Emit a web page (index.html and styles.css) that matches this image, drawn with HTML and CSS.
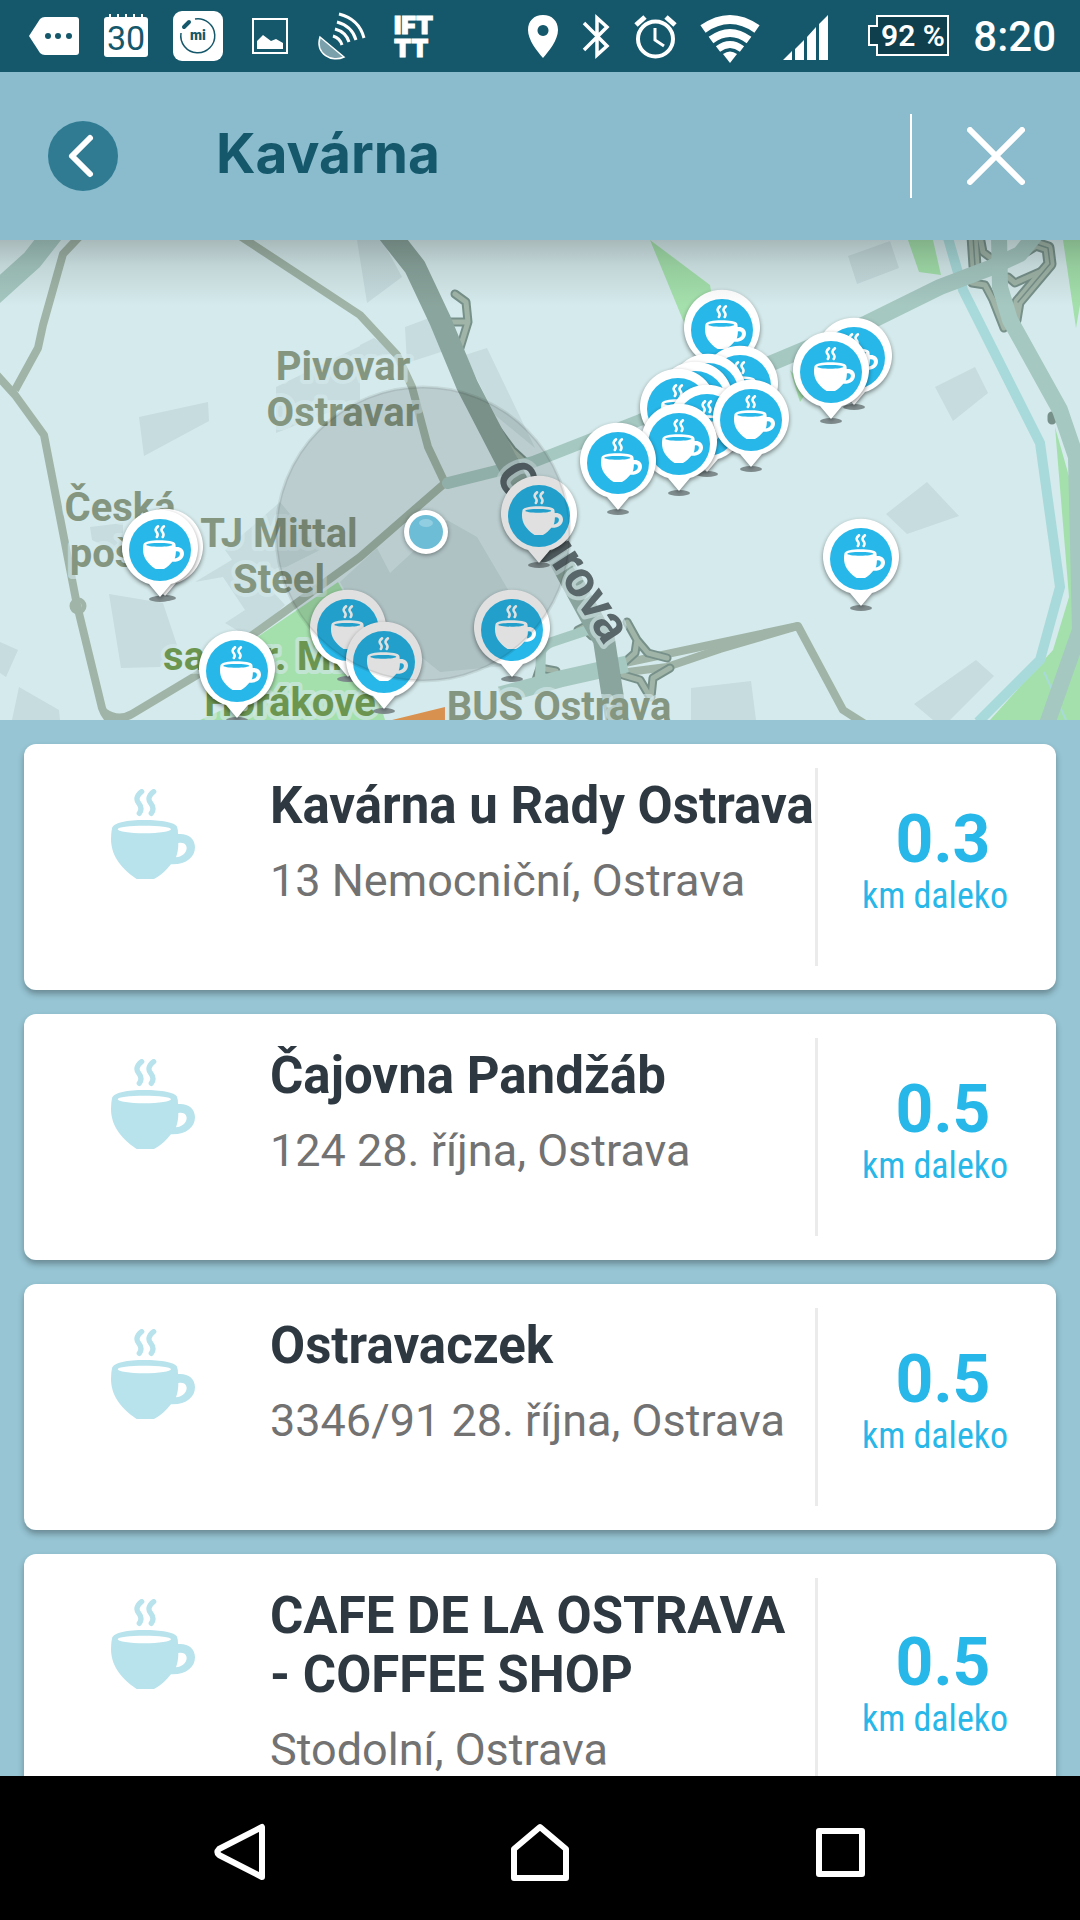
FILE: index.html
```html
<!DOCTYPE html>
<html lang="cs">
<head>
  <meta charset="UTF-8" />
  <meta name="viewport" content="width=device-width, initial-scale=1.0" />
  <title>Kavárna</title>
  <link rel="stylesheet" href="styles.css">
</head>
<body>
  <!-- shared shapes -->
  <svg class="defs" width="0" height="0" aria-hidden="true">
    <symbol id="cup" viewBox="0 0 252 270">
      <g fill="none" stroke="currentColor" stroke-width="16" stroke-linecap="round">
        <path d="M92 8C76 20 74 33 84 44C92 54 92 63 85 73" />
        <path d="M128 8C112 20 110 33 120 44C128 54 128 63 121 73" />
      </g>
      <path fill="currentColor" fill-rule="evenodd" d="M3 118C8 100 50 93 100 93C150 93 192 100 198 113Q201 120 201 135C230 132 252 148 252 175C252 205 225 228 180 226C166 243 150 260 129 270H77C20 232 0 190 0 150Q0 132 3 118ZM20 121C20 128 56 133 100 133S180 128 180 121S144 110 100 110S20 114 20 121ZM202 162C220 158 227 168 227 178C226 193 212 204 195 205C200 192 202 178 202 162Z" />
    </symbol>
    <symbol id="pin" viewBox="-50 -51 100 110" overflow="visible">
      <ellipse cx="0" cy="49" rx="11" ry="3" fill="#7f8c8e" />
      <path class="pin-body" d="M-11 34L0 47L11 34A38 38 0 1 0 -11 34Z" />
      <circle r="31" fill="#27b7e8" />
      <use href="#cup" x="-17" y="-25" width="41" height="44" color="#fff" />
    </symbol>
  </svg>

  <div class="statusbar">
    <div class="notifications">
      <svg viewBox="0 0 72 72"><path fill="#fff" d="M11 36L22 19Q24 17 27 17H58Q61 17 61 20V52Q61 55 58 55H27Q24 55 22 53Z" /><g fill="#15586b"><circle cx="30" cy="36" r="3" /><circle cx="40" cy="36" r="3" /><circle cx="51" cy="36" r="3" /></g></svg>
      <svg viewBox="0 0 72 72"><rect x="14" y="17" width="44" height="40" rx="3" fill="#fff" /><path stroke="#fff" stroke-width="2" d="M20 14v4M28 14v4M36 14v4M44 14v4M52 14v4" /><text class="calendar-day" x="36" y="50">30</text></svg>
      <svg viewBox="0 0 72 72"><rect x="11" y="11" width="50" height="50" rx="9" fill="#fff" /><path fill="none" stroke="#15586b" stroke-width="1.5" d="M33 19A17 17 0 1 1 19 33" /><path stroke="#15586b" stroke-width="4" stroke-linecap="round" d="M22 27L27 22" /><text class="mi-text" x="36" y="40">mi</text></svg>
      <svg viewBox="0 0 72 72"><rect x="19" y="19" width="34" height="34" fill="none" stroke="#fff" stroke-width="2" /><path fill="#fff" d="M23 49V41L29 35L37 41L42 39L49 43V49Z" /></svg>
      <svg viewBox="0 0 72 72"><path fill="#7aa0ac" stroke="#fff" stroke-width="1.5" d="M14 37L38 57C26 63 9 54 14 37Z" /><g fill="none" stroke="#fff" stroke-width="3"><path d="M27 36Q34 38 36 45" /><path d="M29 29Q40 32 43 42" /><path d="M31 22Q46 26 50 40" /><path d="M33 14Q53 19 58 38" /></g></svg>
      <svg viewBox="0 0 72 72"><text class="ifttt-text"><tspan x="16" y="34">IFT</tspan><tspan x="16" y="57">TT</tspan></text></svg>
    </div>
    <div class="system">
      <svg width="30" height="44" viewBox="0 0 30 44"><path fill="#fff" fill-rule="evenodd" d="M15 0C24 0 30 6 30 15C30 25 21 36 15 43C9 36 0 25 0 15C0 6 6 0 15 0ZM15 10a5.500 5.500 0 1 0 .01 0Z" /></svg>
      <svg width="26" height="44" viewBox="0 0 26 44"><path fill="none" stroke="#fff" stroke-width="3.500" d="M1 8L24 31L14 40V3L24 12L1 35" /></svg>
      <svg width="43" height="44" viewBox="0 0 43 44"><circle cx="21.500" cy="24" r="17.500" fill="none" stroke="#fff" stroke-width="4" /><path fill="none" stroke="#fff" stroke-width="3" d="M21 13V25L30 31" /><path stroke="#fff" stroke-width="5" d="M2 10L11 2M41 10L32 2" /></svg>
      <svg width="56" height="48" viewBox="0 0 56 48"><g fill="none" stroke="#fff"><path stroke-width="9" d="M1 14Q28 -5 55 14" /><path stroke-width="8" d="M9 25Q28 11 47 25" /><path stroke-width="7" d="M16 34Q28 25 40 34" /></g><path fill="#fff" d="M21 39Q28 34 35 39L28 48Z" /></svg>
      <svg width="60" height="46" viewBox="0 0 60 46"><path fill="#fff" d="M0 45L9 36V45ZM12 45V34L21 25V45ZM24 45V22L33 12V45ZM36 45V9L45 0V45Z" /></svg>
      <svg width="80" height="42" viewBox="0 0 80 42"><path fill="#0f3e4c" stroke="#fff" stroke-width="2" d="M9 1H80V40H9V30H1V11H9Z" /><text class="battery-text" x="45" y="31">92 %</text></svg>
      <span class="clock">8:20</span>
    </div>
  </div>

  <header class="header">
    <button class="back" aria-label="Zpět">
      <svg width="70" height="70" viewBox="0 0 70 70"><path d="M42 17L24 35L42 53" /></svg>
    </button>
    <h1>Kavárna</h1>
    <button class="close" aria-label="Zavřít">
      <svg width="58" height="58" viewBox="0 0 58 58"><path d="M3 3L55 55M55 3L3 55" /></svg>
    </button>
  </header>

  <svg class="map" viewBox="0 0 1080 480" preserveAspectRatio="xMidYMid slice">
    <defs>
      <linearGradient id="shade" x1="0" y1="0" x2="0" y2="1">
        <stop offset="0" stop-color="#000" stop-opacity=".21" />
        <stop offset=".4" stop-color="#000" stop-opacity=".09" />
        <stop offset="1" stop-color="#000" stop-opacity="0" />
      </linearGradient>
      <path id="street" d="M494 235L620 430" />
    </defs>

    <!-- buildings -->
    <path fill="#c6dcde" d="M139 177L208 162L209 181L144 216ZM109 354L163 363L177 405L160 427L121 428ZM0 402L18 410L6 437L0 433ZM19 447L59 470L60 480H12ZM195 342L240 315L285 365L250 398L225 383L245 370L223 337ZM276 147L360 106V160L276 193ZM90 287L123 283V315L92 300ZM357 0L382 0L402 37L367 63ZM405 87L432 77L447 110L407 123ZM360 105L374 98L396 113L360 120ZM465 115L487 108L535 208L495 175ZM225 310L280 262L320 310L250 345ZM340 342L377 308L390 333L447 280L477 297L510 353L515 425L440 432L350 360ZM848 16L890 1L899 28L857 44ZM935 147L975 127L988 153L953 181ZM886 274L927 242L959 276L907 294ZM914 464L976 420L994 436L950 480H933ZM691 448L751 441L756 480H691Z" />
    <!-- parks -->
    <path fill="#a4e0ac" d="M650 0L710 45L715 75L685 85ZM908 0H933L941 35L919 32ZM1063 0H1080V65L1076 88ZM1055 187L1072 247L1080 370V480H990L1053 410L1069 357ZM338 342L348 360L385 480H200L265 450L250 402ZM790 130L800 162L808 150Z" />
    <path fill="#d9914f" d="M392 480L445 467V480Z" />
    <!-- river -->
    <path fill="none" stroke="#a8dadb" stroke-width="10" d="M948 -2L963 50L1040 203L1060 347L1040 420L978 482" />
    <path fill="none" stroke="#a8dadb" stroke-width="2" d="M1044 432L1066 480" />

    <!-- small roads -->
    <g fill="none" stroke="#a0b5a8" stroke-width="8" stroke-linejoin="round">
      <path d="M80 -4L63 14L43 85L38 108L15 150" />
      <path d="M-4 134L15 155L44 195L77 365L102 468Q105 477 112 482" />
      <path d="M104 472Q118 482 132 474L197 435L283 373L360 317L445 243" />
      <path d="M240 -4L360 75L397 115L412 147L428 207L445 243" />
      <circle cx="78" cy="366" r="6" stroke-width="5" />
      <path d="M620 424L700 407L798 386L843 470L865 484" />
      <path d="M620 433L667 427L720 409L798 386" />
    </g>

    <!-- slip roads -->
    <g fill="none" stroke-linejoin="round" stroke-linecap="round">
      <g stroke="#77918a" stroke-width="9">
        <path d="M455 54L466 62L468 82L460 108M450 82H468" />
        <path d="M490 180L512 210L525 222M627 382L637 400L648 413L667 418M637 400L635 413L625 422M623 435L640 440L650 457M670 428L653 438L651 457M578 390L592 383M584 388L592 396M540 428L536 440M540 428L556 431" />
        <path d="M980 -4L983 12L991 18M1008 37L1015 43L1044 30M972 43L985 45L993 60L1004 88M1052 176V180" />
        <path stroke-width="13" d="M973 -4L975 26M1023 12L1036 4L1048 8L1050 24L1018 62L1015 80" />
      </g>
      <g stroke="#a0b5a8" stroke-width="5">
        <path d="M455 54L466 62L468 82L460 108M450 82H468" />
        <path d="M490 180L512 210L525 222M627 382L637 400L648 413L667 418M637 400L635 413L625 422M623 435L640 440L650 457M670 428L653 438L651 457M578 390L592 383M584 388L592 396M540 428L536 440M540 428L556 431" />
        <path d="M980 -4L983 12L991 18M1008 37L1015 43L1044 30M972 43L985 45L993 60L1004 88" />
        <path stroke-width="9" d="M973 -4L975 26M1023 12L1036 4L1048 8L1050 24L1018 62L1015 80" />
      </g>
      <path stroke="#77918a" stroke-width="1.5" d="M973 -4L975 26M1023 12L1036 4L1048 8L1050 24L1018 62" />
    </g>

    <!-- main roads -->
    <g fill="none" stroke="#a5c8c1" stroke-linejoin="round">
      <path stroke-width="21" d="M-8 56L32 20L54 -8" />
      <path stroke-width="12" stroke-linecap="round" d="M448 243L533 222L640 180L770 123" />
      <path stroke-width="16" d="M760 128L867 83L940 47L990 28L1020 14L1036 -6" />
      <path stroke-width="16" d="M999 -4L1000 47L1010 80L1060 170L1076 217L1080 390L1047 484" />
      <path stroke-width="17" d="M500 455L560 439L627 424" />
      <path stroke-width="10" d="M540 440L541 412Q543 406 552 402L588 390" />
    </g>
    <path fill="none" stroke="#8aa59d" stroke-width="22" stroke-linejoin="round" d="M386 -10L415 27L440 80L467 145L512 232L590 375L604 400L617 484" />

    <g class="place">
      <text x="343" y="140">Pivovar</text>
      <text x="343" y="186">Ostravar</text>
      <text x="120" y="281">Česká</text>
      <text x="120" y="327">pošta</text>
      <text x="279" y="307">TJ Mittal</text>
      <text x="279" y="353">Steel</text>
      <text x="559" y="480">BUS Ostrava</text>
    </g>
    <g class="place park">
      <text x="290" y="430">sad Dr. Milady</text>
      <text x="290" y="476">Horákové</text>
    </g>
    <text class="place street"><textPath href="#street">Cingrova</textPath></text>

    <!-- cafe pins -->
    <g>
      <use href="#pin" x="672" y="39" width="100" height="110" />
      <use href="#pin" x="690" y="95" width="100" height="110" />
      <use href="#pin" x="658" y="103" width="100" height="110" />
      <use href="#pin" x="645" y="111" width="100" height="110" />
      <use href="#pin" x="628" y="118" width="100" height="110" />
      <use href="#pin" x="657" y="134" width="100" height="110" />
      <use href="#pin" x="701" y="129" width="100" height="110" />
      <use href="#pin" x="629" y="153" width="100" height="110" />
      <use href="#pin" x="568" y="172" width="100" height="110" />
      <use href="#pin" x="804" y="67" width="100" height="110" />
      <use href="#pin" x="781" y="81" width="100" height="110" />
      <use href="#pin" x="811" y="268" width="100" height="110" />
      <use href="#pin" x="489" y="225" width="100" height="110" />
      <use href="#pin" x="462" y="339" width="100" height="110" />
      <use href="#pin" x="298" y="339" width="100" height="110" />
      <use href="#pin" x="334" y="371" width="100" height="110" />
      <use href="#pin" x="115" y="258" width="100" height="110" />
      <use href="#pin" x="110" y="259" width="100" height="110" />
      <use href="#pin" x="187" y="380" width="100" height="110" />
    </g>

    <!-- own position -->
    <circle cx="423" cy="294" r="147" fill="#000" fill-opacity=".12" stroke="#000" stroke-opacity=".08" stroke-width="3" />
    <circle class="me" cx="426" cy="292" r="22" />
    <circle cx="426" cy="292" r="17" fill="#6ebdd6" />
    <ellipse cx="426" cy="283" rx="7" ry="4" fill="#92cee1" />

    <rect width="1080" height="66" fill="url(#shade)" />
  </svg>

  <ul class="list">
    <li class="card">
      <svg class="cup"><use href="#cup" /></svg>
      <div class="info">
        <h2>Kavárna u Rady Ostrava</h2>
        <p>13 Nemocniční, Ostrava</p>
      </div>
      <div class="distance"><strong>0.3</strong><span>km daleko</span></div>
    </li>
    <li class="card">
      <svg class="cup"><use href="#cup" /></svg>
      <div class="info">
        <h2>Čajovna Pandžáb</h2>
        <p>124 28. října, Ostrava</p>
      </div>
      <div class="distance"><strong>0.5</strong><span>km daleko</span></div>
    </li>
    <li class="card">
      <svg class="cup"><use href="#cup" /></svg>
      <div class="info">
        <h2>Ostravaczek</h2>
        <p>3346/91 28. října, Ostrava</p>
      </div>
      <div class="distance"><strong>0.5</strong><span>km daleko</span></div>
    </li>
    <li class="card">
      <svg class="cup"><use href="#cup" /></svg>
      <div class="info">
        <h2>CAFE DE LA OSTRAVA - COFFEE SHOP</h2>
        <p>Stodolní, Ostrava</p>
      </div>
      <div class="distance"><strong>0.5</strong><span>km daleko</span></div>
    </li>
  </ul>

  <nav class="navbar">
    <button aria-label="Zpět"><svg viewBox="0 0 60 60"><path d="M52 5V55L9 33Q6 30 9 27Z" /></svg></button>
    <button aria-label="Domů"><svg viewBox="0 0 60 60"><path d="M4 56V27L30 5L56 27V56Z" /></svg></button>
    <button aria-label="Přehled"><svg viewBox="0 0 60 60"><path d="M9 9H52V52H9Z" /></svg></button>
  </nav>
</body>
</html>
```
FILE: styles.css
```css
:root {
  --dark: #15586b;
  --header: #8abccd;
  --bg: #97c5d4;
  --accent: #27b7e8;
}

* {
  margin: 0;
  padding: 0;
  box-sizing: border-box;
}

body {
  display: flex;
  flex-direction: column;
  height: 100vh;
  overflow: hidden;
  font-family: Roboto, "Liberation Sans", sans-serif;
  background: var(--bg);
}

button {
  border: none;
  background: none;
  cursor: pointer;
}

.defs {
  position: absolute;
}

/* status bar */
.statusbar {
  display: flex;
  justify-content: space-between;
  flex: none;
  height: 72px;
  padding: 0 24px 0 18px;
  background: var(--dark);
}

.notifications {
  display: flex;
}

.notifications svg {
  width: 72px;
  height: 72px;
}

.system {
  display: flex;
  align-items: flex-start;
  gap: 25px;
  padding-top: 15px;
}

.system svg {
  overflow: visible;
}

.clock {
  font-size: 42px;
  line-height: 44px;
  font-weight: 500;
  color: #fff;
}

.calendar-day {
  font-family: Roboto, sans-serif;
  font-size: 34px;
  text-anchor: middle;
  fill: var(--dark);
}

.mi-text {
  font-family: Roboto, sans-serif;
  font-size: 14px;
  font-weight: 900;
  text-anchor: middle;
  fill: var(--dark);
}

.ifttt-text {
  font-family: Inter, sans-serif;
  font-size: 25px;
  font-weight: 900;
  fill: #fff;
  stroke: #fff;
  stroke-width: 1px;
}

.battery-text {
  font-size: 30px;
  font-weight: 600;
  text-anchor: middle;
  fill: #fff;
}

/* header */
.header {
  display: flex;
  align-items: center;
  flex: none;
  height: 168px;
  padding-left: 48px;
  background: var(--header);
}

.header svg {
  display: block;
  fill: none;
  stroke: #fff;
  stroke-width: 6px;
  stroke-linecap: round;
  stroke-linejoin: round;
}

.back {
  border-radius: 50%;
  background: #307b92;
}

.header h1 {
  flex: 1;
  padding: 0 0 6px 98px;
  font-family: Inter, sans-serif;
  font-size: 55px;
  line-height: 70px;
  font-weight: 700;
  color: var(--dark);
}

.close {
  width: 170px;
  height: 84px;
  padding-left: 55px;
  border-left: 2px solid #fff;
}

/* map */
.map {
  display: block;
  flex: none;
  width: 100%;
  height: 480px;
  background: #d5eaec;
}

.place {
  font-size: 40px;
  font-weight: 700;
  text-anchor: middle;
  fill: #84967f;
  stroke: #d5eaec;
  stroke-opacity: .6;
  stroke-width: 8px;
  stroke-linejoin: round;
  paint-order: stroke;
}

.park {
  fill: #6c9650;
}

.street {
  font-size: 51px;
  text-anchor: start;
  fill: #59666a;
}

.pin-body {
  fill: #fff;
  filter: drop-shadow(0 2px 2px rgba(0, 0, 0, .45));
}

.me {
  fill: #fff;
  filter: drop-shadow(0 1px 2px rgba(0, 0, 0, .4));
}

/* list */
.list {
  display: flex;
  flex-direction: column;
  flex: 1;
  gap: 24px;
  min-height: 0;
  padding: 24px;
  overflow: hidden;
  list-style: none;
}

.card {
  display: flex;
  flex: none;
  min-height: 246px;
  border-radius: 12px;
  background: #fff;
  box-shadow: 0 4px 6px rgba(0, 0, 0, .3);
}

.cup {
  flex: none;
  width: 84px;
  height: 90px;
  margin: 45px 75px 0 87px;
  color: #b8e3ec;
}

.info {
  flex: 1;
  min-width: 0;
  padding: 32px 0 49px;
}

.info h2 {
  font-size: 51px;
  line-height: 59px;
  color: #2d3841;
}

.info p {
  margin-top: 19px;
  font-size: 45px;
  line-height: 53px;
  color: #727272;
}

.distance {
  display: flex;
  flex-direction: column;
  align-items: center;
  justify-content: center;
  flex: none;
  width: 241px;
  margin: 24px 0;
  padding: 0 4px 12px 0;
  border-left: 3px solid #ebebeb;
  color: var(--accent);
}

.distance strong {
  padding-left: 16px;
  font-size: 66px;
  line-height: 70px;
}

.distance span {
  font-family: "Roboto Condensed", Roboto, sans-serif;
  font-size: 36px;
  line-height: 42px;
}

/* android buttons */
.navbar {
  display: flex;
  flex: none;
  height: 144px;
  padding: 0 90px;
  background: #000;
}

.navbar button {
  display: flex;
  align-items: center;
  justify-content: center;
  flex: 1;
}

.navbar svg {
  width: 60px;
  height: 60px;
  margin-top: 8px;
  fill: none;
  stroke: #fff;
  stroke-width: 6px;
  stroke-linejoin: round;
}
```
